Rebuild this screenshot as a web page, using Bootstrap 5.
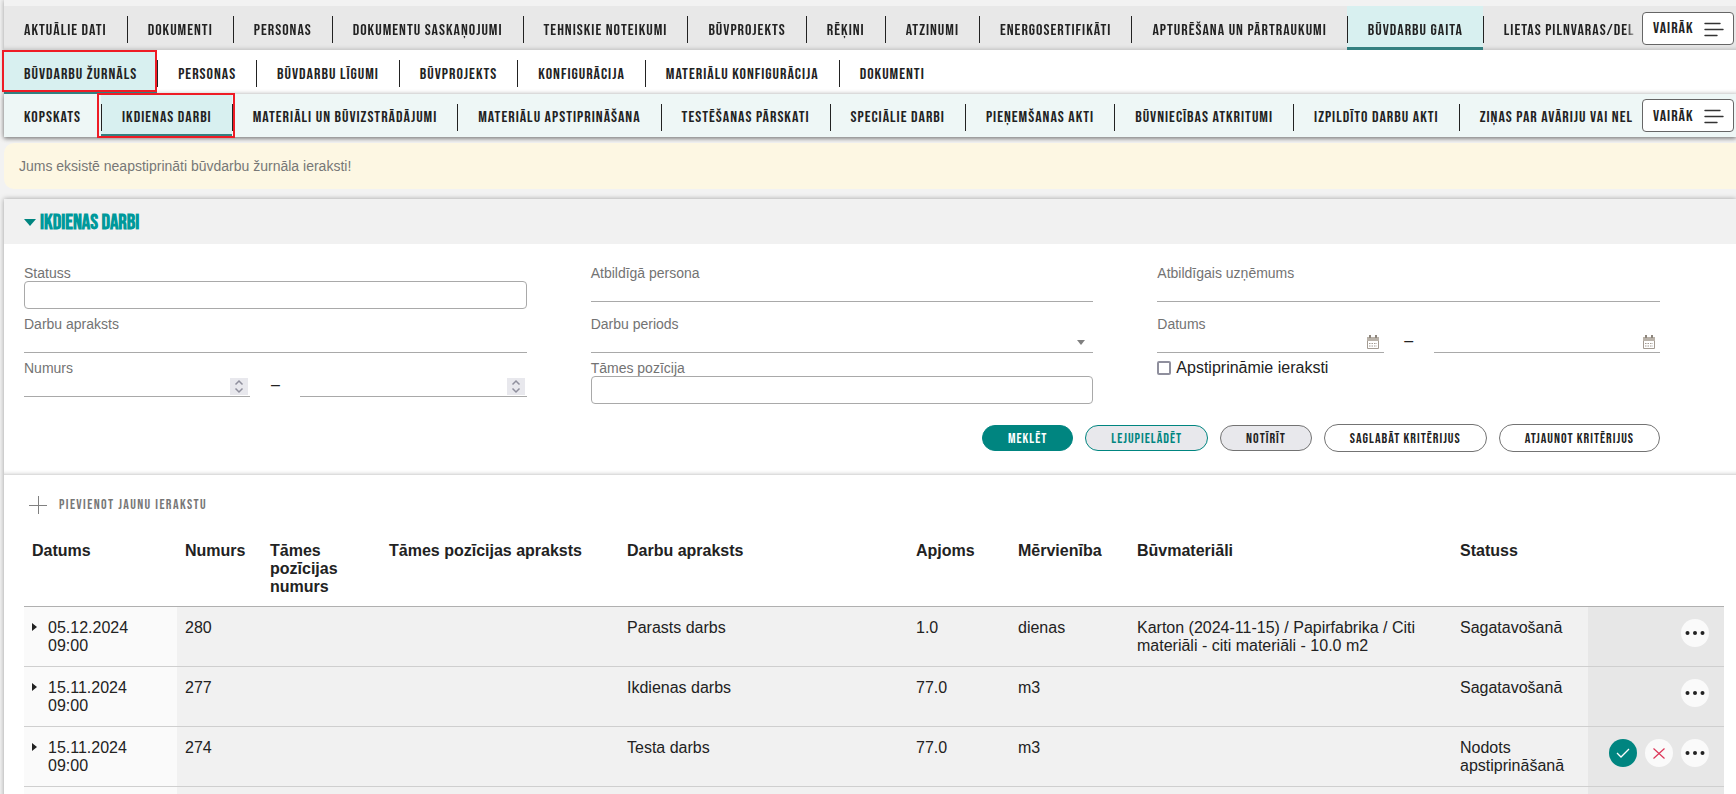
<!DOCTYPE html>
<html lang="lv">
<head>
<meta charset="utf-8">
<meta name="viewport" content="width=device-width, initial-scale=1">
<title>Ikdienas darbi</title>
<link rel="stylesheet" href="https://cdn.jsdelivr.net/npm/bootstrap@5.3.0/dist/css/bootstrap.min.css">
<style>
:root { --teal: #008580; --ink: #222; --muted: #737373; --line: #a9a9a9; }
body { background: #f2f2f2; color: var(--ink); font: 16px/18px "Liberation Sans", Arial, sans-serif; height: 100vh; overflow: hidden; }
.caps { font-family: "Bebas Neue", "Liberation Sans", sans-serif; font-weight: 400; letter-spacing: 1px; text-transform: uppercase; }
.page { margin-left: 4px; padding-top: 6px; box-shadow: 0 0 5px rgba(0,0,0,.35); }
.tabbar { height: 44px; background: #fff; flex-wrap: nowrap; font-size: 16px; box-shadow: inset 0 -5px 4px -4px rgba(0,0,0,.18); }
.tabbar.level-1 { background: #e8e8e8; }
.tabbar.level-3 { height: 43px; background: #eef7f6; box-shadow: 0 2px 4px rgba(0,0,0,.3); }
.tabbar .nav { flex-wrap: nowrap; }
.tabbar .nav-item { display: flex; align-items: center; position: relative; }
.tabbar .nav-item + .nav-item::before { content: ""; position: absolute; left: 0; top: 10px; height: 27px; width: 1px; background: #222; z-index: 1; }
.tabbar .nav-link { height: 44px; line-height: 44px; padding: 3px 20px 0; color: #222; white-space: nowrap; }
.tabbar.level-3 .nav-link { height: 43px; line-height: 42px; }
.tabbar .nav-item + .nav-item .nav-link { padding-left: 21px; }
.tabbar .nav-link.active { background: #d8f0f0; border-bottom: 3px solid #338080; }
.marked::after { content: ""; position: absolute; inset: 0 -2px; border: 2px solid #ee1c25; z-index: 2; pointer-events: none; }
.marked.outer::after { bottom: 2px; right: 0; }
.marked.inner::after { left: -4px; right: -3px; inset-block: -1px; }
.tab-clip { min-width: 0; overflow: hidden; -webkit-mask-image: linear-gradient(to left, transparent 0, #000 12px); mask-image: linear-gradient(to left, transparent 0, #000 12px); }
.tab-clip.shown { overflow: visible; -webkit-mask-image: none; mask-image: none; }
.btn-more { width: 92px; height: 33px; line-height: 16px; padding: 2px 9px 0 10px; background: #fff; border: 1px solid #666; border-radius: 4px; color: #222; margin: 0 2px 0 4px; }
.notice { margin: 6px 0 10px 4px; height: 46px; padding: 0 15px; background: #fdf7e3; border-radius: 10px 0 0 10px; font-size: 14px; color: #777; border: 0; }
.panel { margin-left: 4px; background: #fff; box-shadow: 0 0 5px rgba(0,0,0,.35); }
.panel-title { height: 45px; background: #f1f1f1; padding: 2px 20px 0; font-size: 21px; font-weight: 700; letter-spacing: normal; color: #00999b; margin: 0; gap: 4px; }
.filters { padding: 21px 76px 22px 20px; border-bottom: 1px solid #ddd; box-shadow: inset 0 -4px 4px -4px rgba(0,0,0,.2); height: 231px; }
.filter-grid { display: grid; grid-template-columns: repeat(3, minmax(0, 1fr)); column-gap: 64px; grid-template-rows: 51px 44px 51px; }
.field > label { display: block; font-size: 14px; line-height: 16px; color: var(--muted); height: 16px; }
.line-input, .box-input { display: block; width: 100%; background: transparent; border: 0; outline: 0; font-size: 14px; padding: 0 4px; border-radius: 0; }
.line-input { height: 21px; border-bottom: 1px solid var(--line); }
.box-input { height: 28px; border: 1px solid var(--line); border-radius: 4px; background: #fff; }
select.line-input { appearance: none; }
.with-icon { position: relative; }
.with-icon svg { position: absolute; pointer-events: none; }
.range { display: grid; grid-template-columns: 1fr 50px 1fr; text-align: center; }
input[type=number] { appearance: textfield; -moz-appearance: textfield; }
.pick { width: 14px; height: 14px; appearance: none; border: 2px solid #8f8f9d; border-radius: 2px; background: #fff; margin: 0; }
.option-row { gap: 5px; line-height: 16px; }
.actions { gap: 12px; margin-top: 13px; }
.btn-pill { height: 26px; padding: 1px 25px 0; font-size: 14px; line-height: 23px; border-radius: 13px; border: 1px solid #737373; background: #e8e8ec; color: #222; }
.btn-pill.primary { background: var(--teal); border-color: var(--teal); color: #fff; }
.btn-pill.accent { border-color: var(--teal); color: var(--teal); }
.btn-pill.plain { background: #fff; height: 28px; border-radius: 14px; }
.add-new { color: #777; font-size: 14px; letter-spacing: .1em; padding: 2px 0 0; border: 0; background: none; margin: 19px 0 21px 25px; gap: 12px; }
.journal { width: calc(100% - 32px); margin: 0 12px 0 20px; table-layout: fixed; border-collapse: collapse; }
.journal th { padding: 7px 8px 10px; line-height: 18px; vertical-align: top; font-weight: 700; border-bottom: 1px solid #b0b0b0; }
.journal td { height: 60px; padding: 12px 8px 0; vertical-align: top; background: #f1f1f1; border-bottom: 1px solid #cfcfcf; }
.journal td:first-child { background: #fafafa; }
.journal td:last-child { background: #e7e7e7; padding-right: 15px; }
.date-cell { gap: 11px; }
.round-btn { width: 28px; height: 28px; border-radius: 50%; border: 0; background: #fafafa; padding: 0; display: grid; place-items: center; }
.round-btn.ok { background: var(--teal); }
</style>
</head>
<body>
<header class="page">
  <nav class="tabbar level-1 caps d-flex align-items-center">
    <div class="tab-clip flex-fill"><ul class="nav">
      <li class="nav-item"><a class="nav-link" href="#">Aktuālie dati</a></li>
      <li class="nav-item"><a class="nav-link" href="#">Dokumenti</a></li>
      <li class="nav-item"><a class="nav-link" href="#">Personas</a></li>
      <li class="nav-item"><a class="nav-link" href="#">Dokumentu saskaņojumi</a></li>
      <li class="nav-item"><a class="nav-link" href="#">Tehniskie noteikumi</a></li>
      <li class="nav-item"><a class="nav-link" href="#">Būvprojekts</a></li>
      <li class="nav-item"><a class="nav-link" href="#">Rēķini</a></li>
      <li class="nav-item"><a class="nav-link" href="#">Atzinumi</a></li>
      <li class="nav-item"><a class="nav-link" href="#">Energosertifikāti</a></li>
      <li class="nav-item"><a class="nav-link" href="#">Apturēšana un pārtraukumi</a></li>
      <li class="nav-item"><a class="nav-link active" href="#">Būvdarbu gaita</a></li>
      <li class="nav-item"><a class="nav-link" href="#">Lietas pilnvaras/del</a></li>
    </ul></div>
    <button type="button" class="btn-more caps d-flex align-items-center justify-content-between flex-shrink-0">Vairāk
      <svg width="20" height="15" viewBox="0 0 20 15" stroke="#333" stroke-width="1.4" stroke-linecap="round"><path d="M1 1.5h15M1 7.5h18M1 13.5h12"/></svg></button>
  </nav>
  <nav class="tabbar level-2 caps d-flex align-items-center">
    <ul class="nav">
      <li class="nav-item marked outer"><a class="nav-link active" href="#">Būvdarbu žurnāls</a></li>
      <li class="nav-item"><a class="nav-link" href="#">Personas</a></li>
      <li class="nav-item"><a class="nav-link" href="#">Būvdarbu līgumi</a></li>
      <li class="nav-item"><a class="nav-link" href="#">Būvprojekts</a></li>
      <li class="nav-item"><a class="nav-link" href="#">Konfigurācija</a></li>
      <li class="nav-item"><a class="nav-link" href="#">Materiālu konfigurācija</a></li>
      <li class="nav-item"><a class="nav-link" href="#">Dokumenti</a></li>
    </ul>
  </nav>
  <nav class="tabbar level-3 caps d-flex align-items-center">
    <div class="tab-clip shown flex-fill"><ul class="nav">
      <li class="nav-item"><a class="nav-link" href="#">Kopskats</a></li>
      <li class="nav-item marked inner"><a class="nav-link active" href="#">Ikdienas darbi</a></li>
      <li class="nav-item"><a class="nav-link" href="#">Materiāli un būvizstrādājumi</a></li>
      <li class="nav-item"><a class="nav-link" href="#">Materiālu apstiprināšana</a></li>
      <li class="nav-item"><a class="nav-link" href="#">Testēšanas pārskati</a></li>
      <li class="nav-item"><a class="nav-link" href="#">Speciālie darbi</a></li>
      <li class="nav-item"><a class="nav-link" href="#">Pieņemšanas akti</a></li>
      <li class="nav-item"><a class="nav-link" href="#">Būvniecības atkritumi</a></li>
      <li class="nav-item"><a class="nav-link" href="#">Izpildīto darbu akti</a></li>
      <li class="nav-item"><a class="nav-link" href="#">Ziņas par avāriju vai nel</a></li>
    </ul></div>
    <button type="button" class="btn-more caps d-flex align-items-center justify-content-between flex-shrink-0">Vairāk
      <svg width="20" height="15" viewBox="0 0 20 15" stroke="#333" stroke-width="1.4" stroke-linecap="round"><path d="M1 1.5h15M1 7.5h18M1 13.5h12"/></svg></button>
  </nav>
</header>

<div class="notice d-flex align-items-center" role="alert">Jums eksistē neapstiprināti būvdarbu žurnāla ieraksti!</div>

<main class="panel">
  <h1 class="panel-title caps d-flex align-items-center"><svg width="12" height="7" viewBox="0 0 12 7"><path d="M0 0h12L6 7z" fill="#008580"/></svg>Ikdienas darbi</h1>
  <form class="filters">
    <div class="filter-grid">
      <div class="field"><label for="st">Statuss</label><input class="box-input" id="st"></div>
      <div class="field"><label for="per">Atbildīgā persona</label><input class="line-input" id="per"></div>
      <div class="field"><label for="uzn">Atbildīgais uzņēmums</label><input class="line-input" id="uzn"></div>
      <div class="field"><label for="apr">Darbu apraksts</label><input class="line-input" id="apr"></div>
      <div class="field"><label for="prd">Darbu periods</label><div class="with-icon"><select class="line-input" id="prd"><option></option></select><svg class="end-0 me-2 bottom-0 mb-2" width="8" height="5" viewBox="0 0 8 5"><path d="M0 0h8L4 5z" fill="#808080"/></svg></div></div>
      <div class="field"><label for="d1">Datums</label><div class="range">
        <div class="with-icon"><input class="line-input" id="d1"><svg class="end-0 bottom-0 me-1 mb-1" width="14" height="14" viewBox="0 0 14 14"><path d="M1.500 2.500h11v11h-11z" fill="#fff" stroke="#a39b92"/><path d="M1 2h12v4H1z" fill="#b9b2a9"/><path d="M4 0v3M10 0v3" stroke="#8d857c" stroke-width="2"/><path d="M3 8.500h8M3 11h8" stroke="#a39b92" stroke-dasharray="1.500 1"/></svg></div>
        <span>–</span>
        <div class="with-icon"><input class="line-input" aria-label="Datums līdz"><svg class="end-0 bottom-0 me-1 mb-1" width="14" height="14" viewBox="0 0 14 14"><path d="M1.500 2.500h11v11h-11z" fill="#fff" stroke="#a39b92"/><path d="M1 2h12v4H1z" fill="#b9b2a9"/><path d="M4 0v3M10 0v3" stroke="#8d857c" stroke-width="2"/><path d="M3 8.500h8M3 11h8" stroke="#a39b92" stroke-dasharray="1.500 1"/></svg></div>
      </div></div>
      <div class="field"><label for="n1">Numurs</label><div class="range">
        <div class="with-icon"><input type="number" class="line-input" id="n1"><svg class="end-0 bottom-0" width="20" height="19" viewBox="0 0 20 19"><path d="M0 0h18v17H0z" fill="#e8e8ed"/><path d="M5.500 6.500 9 3l3.500 3.500M5.500 10.500 9 14l3.500-3.500" fill="none" stroke="#8f8f9d" stroke-width="1.500"/></svg></div>
        <span>–</span>
        <div class="with-icon"><input type="number" class="line-input" aria-label="Numurs līdz"><svg class="end-0 bottom-0" width="20" height="19" viewBox="0 0 20 19"><path d="M0 0h18v17H0z" fill="#e8e8ed"/><path d="M5.500 6.500 9 3l3.500 3.500M5.500 10.500 9 14l3.500-3.500" fill="none" stroke="#8f8f9d" stroke-width="1.500"/></svg></div>
      </div></div>
      <div class="field"><label for="poz">Tāmes pozīcija</label><input class="box-input" id="poz"></div>
      <div class="option-row d-flex align-items-center align-self-start"><input type="checkbox" class="pick" id="apst"><label for="apst">Apstiprināmie ieraksti</label></div>
    </div>
    <div class="actions d-flex justify-content-end align-items-center">
      <button type="button" class="btn-pill primary caps">Meklēt</button>
      <button type="button" class="btn-pill accent caps">Lejupielādēt</button>
      <button type="button" class="btn-pill caps">Notīrīt</button>
      <button type="button" class="btn-pill plain caps">Saglabāt kritērijus</button>
      <button type="button" class="btn-pill plain caps">Atjaunot kritērijus</button>
    </div>
  </form>
  <button type="button" class="add-new caps d-flex align-items-center"><svg width="18" height="18" viewBox="0 0 18 18" stroke="#808080"><path d="M9.500 0v18M0 9.500h18"/></svg>Pievienot jaunu ierakstu</button>
  <table class="journal">
    <colgroup><col style="width:9%"><col style="width:5%"><col style="width:7%"><col style="width:14%"><col style="width:17%"><col style="width:6%"><col style="width:7%"><col style="width:19%"><col style="width:8%"><col style="width:8%"></colgroup>
    <thead><tr><th>Datums</th><th>Numurs</th><th>Tāmes pozīcijas numurs</th><th>Tāmes pozīcijas apraksts</th><th>Darbu apraksts</th><th>Apjoms</th><th>Mērvienība</th><th>Būvmateriāli</th><th>Statuss</th><th></th></tr></thead>
    <tbody>
      <tr><td><div class="date-cell d-flex"><svg class="mt-1 flex-shrink-0" width="5" height="8" viewBox="0 0 5 8"><path d="M0 0l5 4-5 4z" fill="#222"/></svg><span>05.12.2024<br>09:00</span></div></td><td>280</td><td></td><td></td><td>Parasts darbs</td><td>1.0</td><td>dienas</td><td>Karton (2024-11-15) / Papirfabrika / Citi materiāli - citi materiāli - 10.0 m2</td><td>Sagatavošanā</td>
        <td><div class="d-flex justify-content-end"><button type="button" class="round-btn" aria-label="Darbības"><svg width="20" height="4" viewBox="0 0 20 4" fill="#222"><circle cx="2.500" cy="2" r="2"/><circle cx="10" cy="2" r="2"/><circle cx="17.500" cy="2" r="2"/></svg></button></div></td></tr>
      <tr><td><div class="date-cell d-flex"><svg class="mt-1 flex-shrink-0" width="5" height="8" viewBox="0 0 5 8"><path d="M0 0l5 4-5 4z" fill="#222"/></svg><span>15.11.2024<br>09:00</span></div></td><td>277</td><td></td><td></td><td>Ikdienas darbs</td><td>77.0</td><td>m3</td><td></td><td>Sagatavošanā</td>
        <td><div class="d-flex justify-content-end"><button type="button" class="round-btn" aria-label="Darbības"><svg width="20" height="4" viewBox="0 0 20 4" fill="#222"><circle cx="2.500" cy="2" r="2"/><circle cx="10" cy="2" r="2"/><circle cx="17.500" cy="2" r="2"/></svg></button></div></td></tr>
      <tr><td><div class="date-cell d-flex"><svg class="mt-1 flex-shrink-0" width="5" height="8" viewBox="0 0 5 8"><path d="M0 0l5 4-5 4z" fill="#222"/></svg><span>15.11.2024<br>09:00</span></div></td><td>274</td><td></td><td></td><td>Testa darbs</td><td>77.0</td><td>m3</td><td></td><td>Nodots apstiprināšanā</td>
        <td><div class="d-flex justify-content-end gap-2"><button type="button" class="round-btn ok" aria-label="Apstiprināt"><svg width="14" height="10" viewBox="0 0 14 10" fill="none" stroke="#fff" stroke-width="1.300"><path d="M1 5l4 4 8-8"/></svg></button><button type="button" class="round-btn" aria-label="Noraidīt"><svg width="12" height="11" viewBox="0 0 12 11" stroke="#dc3558" stroke-width="1.200"><path d="M.5.5l11 10M11.500.5l-11 10"/></svg></button><button type="button" class="round-btn" aria-label="Darbības"><svg width="20" height="4" viewBox="0 0 20 4" fill="#222"><circle cx="2.500" cy="2" r="2"/><circle cx="10" cy="2" r="2"/><circle cx="17.500" cy="2" r="2"/></svg></button></div></td></tr>
      <tr><td></td><td></td><td></td><td></td><td></td><td></td><td></td><td></td><td></td><td></td></tr>
    </tbody>
  </table>
</main>
<script src="https://cdn.jsdelivr.net/npm/bootstrap@5.3.0/dist/js/bootstrap.bundle.min.js"></script>
</body>
</html>
